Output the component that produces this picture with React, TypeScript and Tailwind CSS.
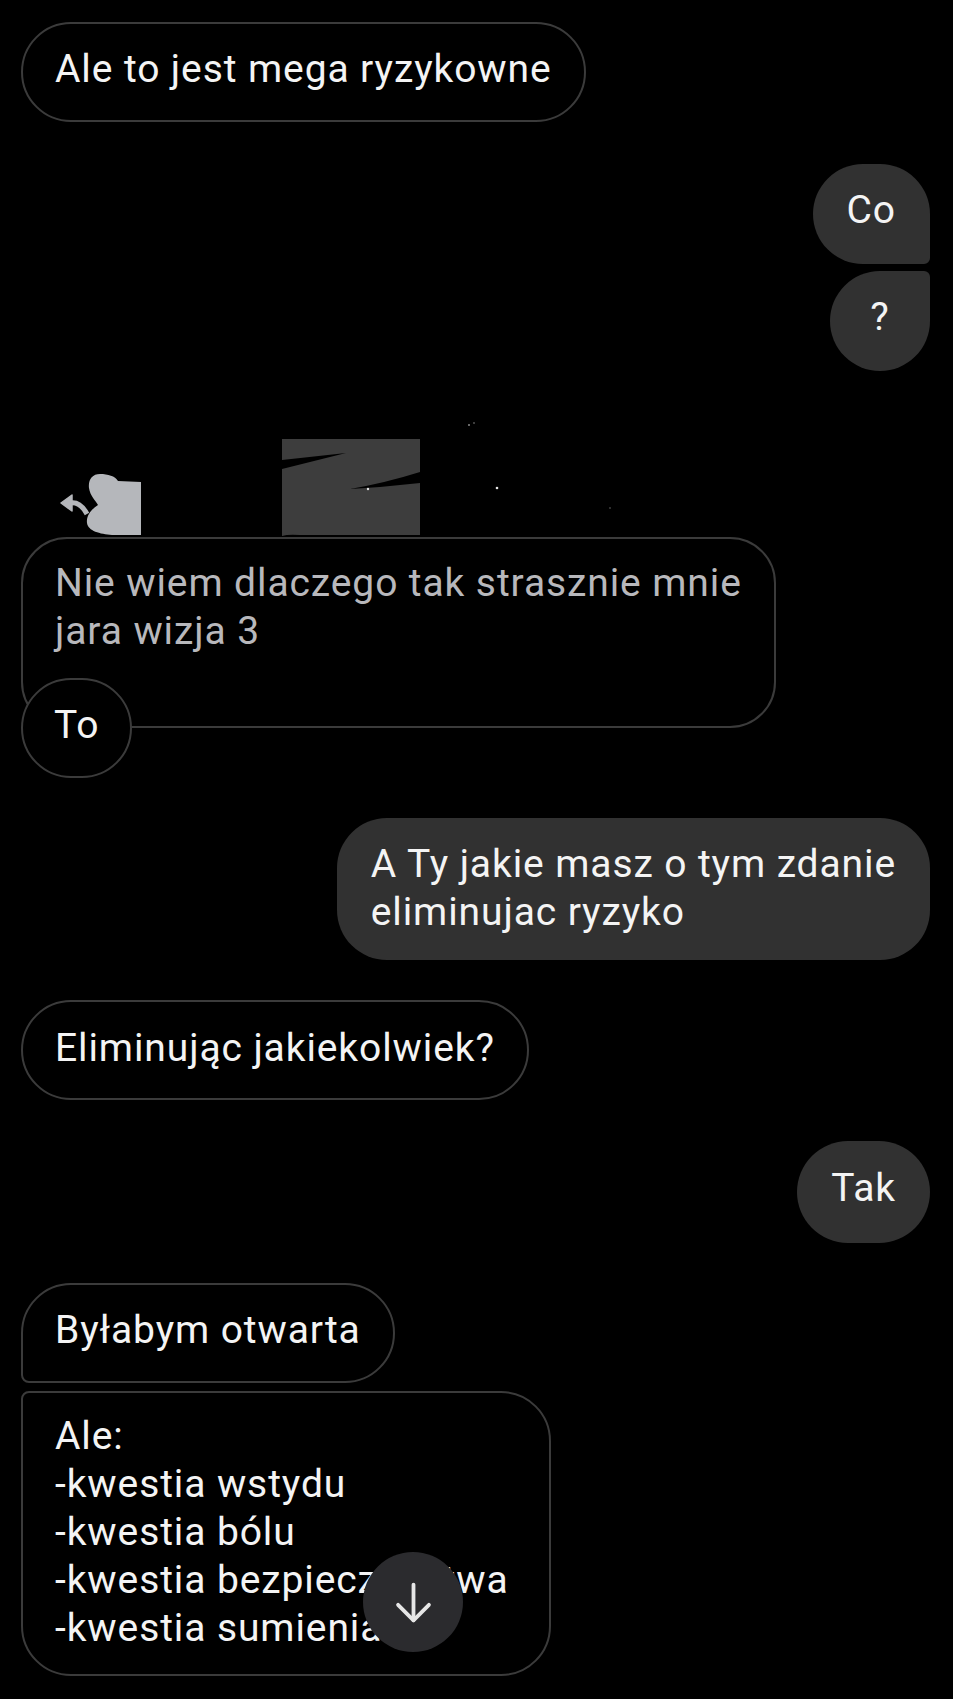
import React from "react";

const filled = "bg-[#313131] text-[#f4f4f4]";
const outlined = "border-2 border-[#3b3b3b] bg-black text-[#f4f4f4]";

function RedactedPhoto() {
  // what is left of a censored photo above the quoted message
  return (
    <svg width="700" height="124" viewBox="21 0 700 124" className="block">
      <path d="M61 90 L72 82 L72 98 Z" fill="#b5b7bb" strokeLinejoin="round" stroke="#b5b7bb" strokeWidth="1.5" />
      <path d="M70 90 Q80 88 87 101" stroke="#b5b7bb" strokeWidth="5" fill="none" />
      <path
        d="M100 61 C92 61 88 67 89 75 C90 83 96 88 98 92 C92 96 86 102 87 110 C88 118 100 121 112 122 L141 122 L141 69 L118 68 C115 63 108 61 100 61 Z"
        fill="#b5b7bb"
      />
      <path d="M282 26 L420 26 L420 122 L300 122 Q288 121 282 123 Z" fill="#3d3d3d" />
      <path d="M282 47 L346 40 L282 56 Z" fill="#000" />
      <path d="M420 59 Q385 70 350 76 Q385 74 420 70 Z" fill="#000" />
      <circle cx="368" cy="76" r="1.2" fill="#e5e5e5" />
      <circle cx="497" cy="75" r="1.3" fill="#e5e5e5" />
      <circle cx="469" cy="12" r="1" fill="#8a8a8a" />
      <circle cx="474" cy="10" r="0.8" fill="#8a8a8a" />
      <circle cx="610" cy="95" r="0.8" fill="#6a6a6a" />
    </svg>
  );
}

export default function App() {
  return (
    <div className="relative min-h-screen w-full bg-black font-['Roboto',sans-serif] text-[39px] leading-[48px] tracking-[0.9px] pl-[21px] pr-[23px] pt-[22px] pb-[26px] flex flex-col">
      <div className={`${outlined} self-start rounded-full px-[32px] pt-[21px] pb-[27px] whitespace-nowrap`}>
        Ale to jest mega ryzykowne
      </div>

      <div className="mt-[42px] flex flex-col items-end gap-[7px]">
        <div className={`${filled} min-w-[100px] text-center rounded-[50px] rounded-br-[6px] px-[34px] pt-[22px] pb-[30px]`}>Co</div>
        <div className={`${filled} min-w-[100px] text-center rounded-[50px] rounded-tr-[6px] px-[34px] pt-[22px] pb-[30px]`}>?</div>
      </div>

      <div className="mt-[42px] flex flex-col items-start">
        <RedactedPhoto />
        <div className="border-2 border-[#3b3b3b] rounded-[46px] px-[32px] pt-[20px] pb-[71px] text-[#b8b8bc] whitespace-nowrap">
          Nie wiem dlaczego tak strasznie mnie
          <br />
          jara wizja 3
        </div>
        <div className={`${outlined} -mt-[50px] rounded-full px-[31px] pt-[21px] pb-[27px] relative`}>To</div>
      </div>

      <div className={`${filled} mt-[40px] self-end rounded-[50px] px-[34px] pt-[22px] pb-[24px] whitespace-nowrap`}>
        A Ty jakie masz o tym zdanie
        <br />
        eliminujac ryzyko
      </div>

      <div className={`${outlined} mt-[40px] self-start rounded-full px-[32px] pt-[22px] pb-[26px] whitespace-nowrap`}>
        Eliminując jakiekolwiek?
      </div>

      <div className={`${filled} mt-[41px] self-end min-w-[100px] rounded-full px-[34px] pt-[23px] pb-[31px]`}>Tak</div>

      <div className="mt-[40px] flex flex-col items-start gap-[8px]">
        <div className={`${outlined} rounded-[50px] rounded-bl-[8px] px-[32px] pt-[21px] pb-[27px] whitespace-nowrap`}>
          Byłabym otwarta
        </div>
        <div className={`${outlined} rounded-[50px] rounded-tl-[8px] pl-[32px] pr-[40px] pt-[19px] pb-[22px] whitespace-nowrap`}>
          Ale:
          <br />
          -kwestia wstydu
          <br />
          -kwestia bólu
          <br />
          -kwestia bezpieczeństwa
          <br />
          -kwestia sumienia
        </div>
      </div>

      <button className="absolute left-[363px] top-[1552px] w-[100px] h-[100px] rounded-full bg-[#2b2b2e] flex items-center justify-center">
        <svg width="57" height="57" viewBox="0 0 24 24" fill="none" stroke="#e6e6e6" strokeWidth="1.6" strokeLinecap="round" strokeLinejoin="round">
          <path d="M12 4.5 V19.5" />
          <path d="M5.5 13 L12 19.5 L18.5 13" />
        </svg>
      </button>
    </div>
  );
}
